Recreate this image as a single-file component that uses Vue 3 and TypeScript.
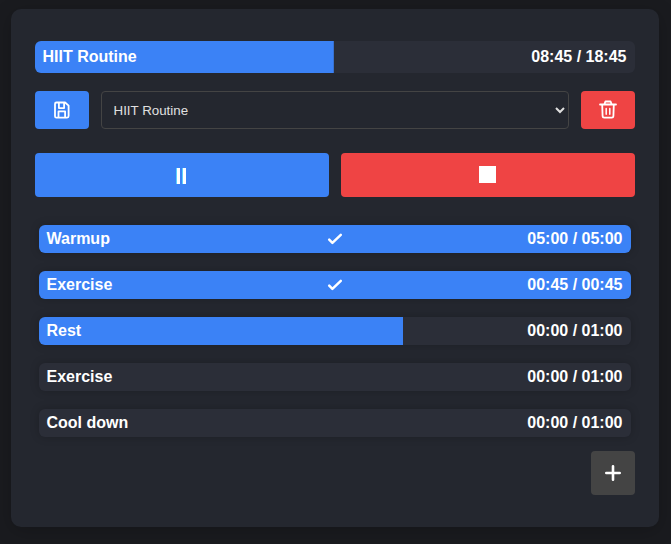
<script setup lang="ts">
import { ref } from 'vue'

interface Step {
  name: string
  time: string
  progress: number
}

const routine = ref('HIIT Routine')
const total = { time: '08:45 / 18:45', progress: 49.8 }
const steps: Step[] = [
  { name: 'Warmup', time: '05:00 / 05:00', progress: 100 },
  { name: 'Exercise', time: '00:45 / 00:45', progress: 100 },
  { name: 'Rest', time: '00:00 / 01:00', progress: 61.5 },
  { name: 'Exercise', time: '00:00 / 01:00', progress: 0 },
  { name: 'Cool down', time: '00:00 / 01:00', progress: 0 },
]
</script>

<template>
  <main class="card">
    <header class="bar total" :style="{ '--progress': total.progress + '%' }">
      <span>{{ routine }}</span>
      <span>{{ total.time }}</span>
    </header>

    <div class="picker">
      <button class="btn primary save" aria-label="Save">
        <svg width="16" height="18" viewBox="0 0 16 18" fill="none" stroke="#fff" stroke-width="1.8" stroke-linejoin="round">
          <path d="M2.4 1.5h8.7l3.5 3.2v10.4a1.5 1.5 0 0 1-1.5 1.5H2.4a1.4 1.4 0 0 1-1.4-1.4V2.9a1.4 1.4 0 0 1 1.4-1.4z" />
          <path d="M4.9 1.8v5.3h5.2V1.8M4.5 16.4v-6h6.6v6" />
        </svg>
      </button>
      <select v-model="routine" class="select">
        <option>HIIT Routine</option>
      </select>
      <button class="btn danger trash" aria-label="Delete">
        <svg width="18" height="19" viewBox="0 0 18 19" fill="none" stroke="#fff" stroke-width="1.8" stroke-linecap="round" stroke-linejoin="round">
          <path d="M1 4.5h16M5.4 4.3l1-2.8h5.2l1 2.8M3.2 4.7l.4 11.4a1.6 1.6 0 0 0 1.6 1.5h7.6a1.6 1.6 0 0 0 1.6-1.5l.4-11.4" />
          <path d="M7.2 8.5v5.7M10.8 8.5v5.7" stroke-width="1.5" />
        </svg>
      </button>
    </div>

    <div class="controls">
      <button class="btn primary pause" aria-label="Pause">
        <svg width="10" height="16" viewBox="0 0 10 16">
          <path d="M0 0h1v16H0zM6 0h1v16H6z" fill="#5bd0ff" />
          <path d="M1 0h3v16H1zM7 0h3v16H7z" fill="#fff" />
        </svg>
      </button>
      <button class="btn danger stop" aria-label="Stop">
        <svg width="17" height="17"><rect width="17" height="17" fill="#fff" /></svg>
      </button>
    </div>

    <section class="steps">
      <div
        v-for="(step, i) in steps"
        :key="i"
        class="bar step"
        :style="{ '--progress': step.progress + '%' }"
      >
        <span>{{ step.name }}</span>
        <svg v-if="step.progress === 100" class="check" width="16" height="12" viewBox="0 0 16 12" fill="none" stroke="#fff" stroke-width="2.5" stroke-linecap="round" stroke-linejoin="round">
          <path d="M2.2 6.7l3.2 3.2L13.8 1.9" />
        </svg>
        <span class="time">{{ step.time }}</span>
      </div>
    </section>

    <button class="btn add" aria-label="Add step">
      <svg width="16" height="16" viewBox="0 0 16 16" stroke="#fff" stroke-width="2.6" stroke-linecap="round">
        <path d="M8 1.3v13.4M1.3 8h13.4" />
      </svg>
    </button>
  </main>
</template>

<style>
body {
  background: #1a1b1f;
}
#app {
  display: flow-root;
  height: 544px;
  overflow: hidden;
}
</style>

<style scoped>
.card {
  box-sizing: border-box;
  display: flex;
  flex-direction: column;
  width: 648px;
  height: 518px;
  margin: 9px 0 0 11px;
  padding: 32px 24px;
  border-radius: 10px;
  background: #24272f;
  box-shadow: 0 4px 20px rgba(0, 0, 0, 0.2);
  color: #fff;
  font-family: "Liberation Sans", Arial, sans-serif;
}
.bar {
  box-sizing: border-box;
  display: flex;
  align-items: center;
  justify-content: space-between;
  background: linear-gradient(#3b82f6, #3b82f6) 0 0 / var(--progress) 100% no-repeat #2b2e38;
  font-size: 16px;
  font-weight: bold;
  line-height: 18px;
}
.total {
  height: 32px;
  padding: 0 8.5px 0 7.5px;
  border-radius: 6px;
}
.picker {
  display: flex;
  gap: 12px;
  height: 38px;
  margin-top: 18px;
}
.btn {
  display: flex;
  align-items: center;
  justify-content: center;
  box-sizing: border-box;
  padding: 0;
  border: 0;
  border-radius: 4px;
}
.btn svg {
  display: block;
}
.picker .btn {
  width: 54px;
}
.trash {
  padding-bottom: 1px;
}
.primary {
  background: #3b82f6;
}
.danger {
  background: #ef4444;
}
.select {
  flex: 1;
  box-sizing: border-box;
  padding: 0 0 0 7.5px;
  border: 1px solid #444;
  border-radius: 4px;
  background: #24272f;
  color: #e0e0e0;
  font-family: inherit;
  font-size: 13.333px;
}
.controls {
  display: grid;
  grid-template-columns: 1fr 1fr;
  gap: 12px;
  height: 44px;
  margin-top: 24px;
}
.pause {
  padding: 2px 2px 0 0;
}
.stop {
  padding: 0 1px 1px 0;
}
.steps {
  display: flex;
  flex-direction: column;
  gap: 18px;
  margin: 28px 4px 14px;
}
.step {
  display: grid;
  grid-template-columns: 1fr auto 1fr;
  height: 28px;
  padding: 0 8.5px 1px 7.5px;
  border-radius: 6px;
  box-shadow: 0 0 10px rgba(0, 0, 0, 0.2);
}
.time {
  grid-column: 3;
  text-align: right;
}
.add {
  align-self: flex-end;
  width: 44px;
  height: 44px;
  background: #444;
}
</style>
